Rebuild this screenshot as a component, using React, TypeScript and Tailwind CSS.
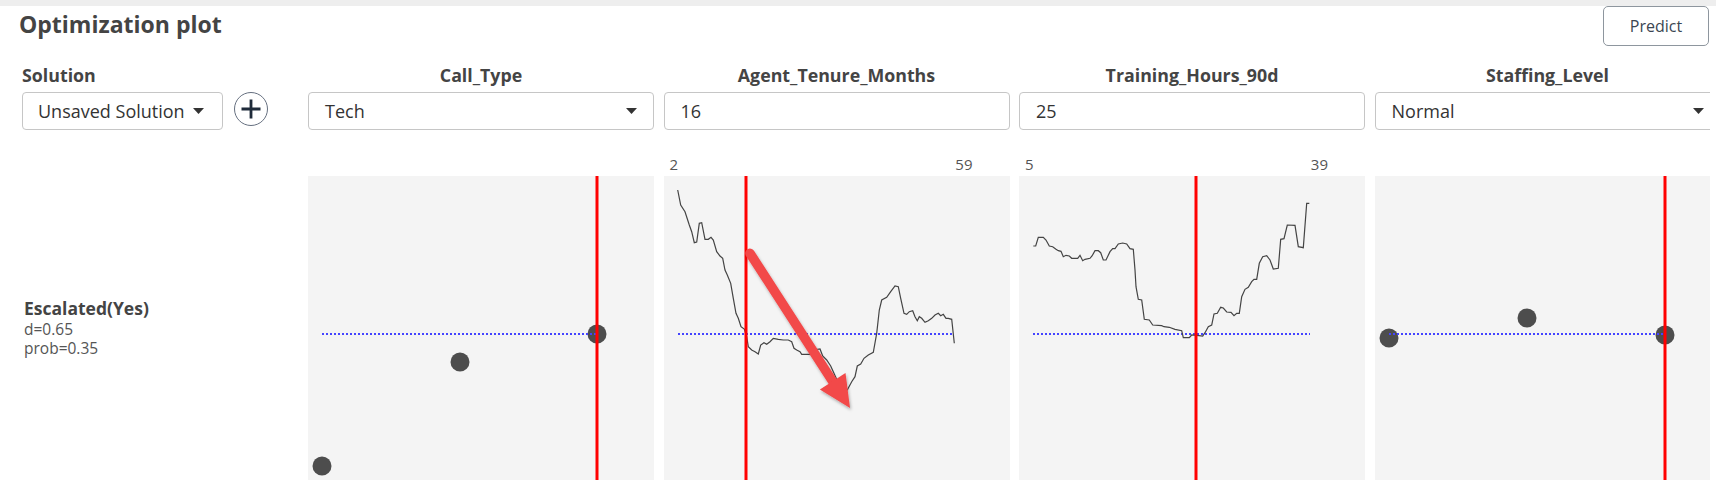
import React from "react";

const curve2 =
  "13.7,14 16.7,29 21,35.7 25.3,49 27.7,55.7 30.3,66.7 32.7,66 35.3,47.3 37.7,46.7 41,63.3 44.3,63.3 47,61.3 49.3,64 52.7,75.7 56,80 58.7,82.3 61,94 63.3,99 66.7,107.3 69.3,122.3 72,137.3 74.3,142.3 77,150.7 80.3,153 82.7,160.7 84.3,170.7 87.7,174 91,175.7 94.3,178 96.7,169 100,166.7 102.7,168.3 106,165.7 109.3,162.3 114.3,163.3 119.3,164 124.3,164 127.7,165.7 130,172.3 132.7,174 136,175.7 137.7,178.3 146,178.3 149.3,174 156,173 158.7,180 162.7,184 166.7,190 169.3,195.7 172.5,203 176,210 180,214 183.3,214 187.7,205.7 191,200.7 193.3,190 196.7,188 200,182.3 204.3,179 209.3,176.3 212.7,157.3 215.3,134 217.7,124 222.7,121.3 226.7,115.7 231,110 234.3,110.7 236.7,122.3 240,137.3 242.7,138.3 245.3,135.7 248.7,134.7 251,140.7 253.3,144.7 255.3,140.7 257.7,142.3 261,146.3 264.3,144.7 267.7,142.3 271,139 274.3,137.3 276.7,139.7 279.3,138.3 282,142.3 284.3,142.3 287.7,143.3 290.3,167.3";

const curve3 =
  "14.3,70 16.7,70 19.3,61.3 24.3,61.3 27,64 30.3,70 33.7,70.7 37,73.3 39.3,74.7 42,75.3 44.3,80.7 47,79.3 50.3,80 52.7,82.3 58.7,82.3 61,79.3 63.7,84.7 66,83.3 71,82.3 73,80 76,74.7 79.3,74.7 81.7,76.7 84.3,84 87,84 91,75.7 93.7,72.7 96,72.7 99.3,68 103.7,67 107.7,68 111,72.7 114.3,73.3 116,94 117,110.7 119.3,123.3 122.7,124 125.3,143.3 130.3,144 133.7,149 142.7,149.7 145,150.7 150.3,151.3 156,153.3 162.7,154.7 164.3,161.7 170.3,161.7 172.7,159 180,159.7 183.7,160 186,156.7 189.3,150.7 192.7,149 195,138 198.3,137.3 201.7,131.3 204.3,132 207.7,136 212,136.3 215,139.7 217.7,137.3 220.3,137.3 222.7,120.7 226,113.3 229.3,111.3 232.7,105.7 235,103.3 237.7,103.3 240.3,87.3 243.7,80.7 247.7,79.7 251,84 254.3,93 259.3,92.3 261.7,63.3 265,62.7 268.3,49 276,49.3 279.3,70.7 284.3,71.7 287.7,27.3 290.3,27.3";

function BlueLine({ x1, x2 }: { x1: number; x2: number }) {
  return (
    <line x1={x1} x2={x2} y1={158} y2={158} stroke="#4444ff" strokeWidth={2} strokeDasharray="2 2" />
  );
}

function RedLine({ x }: { x: number }) {
  return <line x1={x} x2={x} y1={0} y2={304} stroke="#ff0000" strokeWidth={3} />;
}

function Dot({ x, y }: { x: number; y: number }) {
  return <circle cx={x} cy={y} r={9.5} fill="#4d4d4d" />;
}

function Caret() {
  return (
    <svg width="11" height="6" viewBox="0 0 11 6" className="shrink-0">
      <path d="M0 0 L11 0 L5.5 6 Z" fill="#333" />
    </svg>
  );
}

function Field({ value, select }: { value: string; select?: boolean }) {
  return (
    <div className="h-[38px] border border-[#c6c6c6] rounded-[4px] bg-white flex items-center justify-between pl-[16px] pr-[16px] text-[18px] text-[#333]">
      <span>{value}</span>
      {select ? <Caret /> : null}
    </div>
  );
}

function ChartBox({ children }: { children: React.ReactNode }) {
  return (
    <div className="h-[304px] bg-[#f4f4f4]">
      <svg width="346" height="304" viewBox="0 0 346 304" className="block">
        {children}
      </svg>
    </div>
  );
}

function AxisLabels({ min, max }: { min?: string; max?: string }) {
  return (
    <div className="h-[46px] flex items-end justify-between pl-[6px] pr-[37px] pb-[2px] text-[15px] leading-[20px] text-[#555]">
      <span>{min}</span>
      <span>{max}</span>
    </div>
  );
}

function Header({ text }: { text: string }) {
  return (
    <div className="h-[31px] text-center text-[17.8px] leading-[28px] font-bold text-[#444]">{text}</div>
  );
}

export default function App() {
  return (
    <div className="w-[1716px] h-[496px] bg-white font-['Open_Sans',sans-serif] overflow-hidden">
      <div className="h-[6px] bg-[#eeeeee]" />
      <div className="w-[1710px] overflow-hidden">
        <div className="h-[40px] flex justify-between items-start pl-[19px] pr-[1px]">
          <h1 className="mt-[4px] text-[23px] leading-[28px] font-bold text-[#444]">Optimization plot</h1>
          <button className="h-[40px] w-[106px] border border-[#8e969e] rounded-[5px] bg-white text-[16px] text-[#3b4652]">
            Predict
          </button>
        </div>
        <div className="mt-[15px] pl-[22px] grid grid-cols-[276.5px_346px_346px_346px_346px] gap-x-[9.5px] grid-rows-[31px_38px_46px_304px]">
          {/* row 1 */}
          <div className="h-[31px] text-[17.8px] leading-[28px] font-bold text-[#444]">Solution</div>
          <Header text="Call_Type" />
          <Header text="Agent_Tenure_Months" />
          <Header text="Training_Hours_90d" />
          <Header text="Staffing_Level" />
          {/* row 2 */}
          <div className="flex items-center gap-[11px]">
            <div className="w-[201px] h-[38px] border border-[#c6c6c6] rounded-[4px] bg-white flex items-center justify-between pl-[15px] pr-[18px] text-[18px] text-[#333]">
              <span>Unsaved Solution</span>
              <Caret />
            </div>
            <button className="w-[34px] h-[34px] -mt-[4px] rounded-full border border-[#667080] bg-white flex items-center justify-center">
              <svg width="22" height="22" viewBox="0 0 22 22">
                <path d="M11 1.5 V20.5 M1.5 11 H20.5" stroke="#1f2b3a" strokeWidth="2.8" />
              </svg>
            </button>
          </div>
          <Field value="Tech" select />
          <Field value="16" />
          <Field value="25" />
          <Field value="Normal" select />
          {/* row 3 */}
          <div />
          <AxisLabels />
          <AxisLabels min="2" max="59" />
          <AxisLabels min="5" max="39" />
          <AxisLabels />
          {/* row 4 */}
          <div className="flex flex-col justify-center pl-[2px] text-[#444]">
            <div className="text-[17.5px] leading-[21px] font-bold">Escalated(Yes)</div>
            <div className="text-[15.5px] leading-[20px] text-[#555]">d=0.65</div>
            <div className="text-[15.5px] leading-[19px] text-[#555]">prob=0.35</div>
          </div>
          <ChartBox>
            <Dot x={14} y={290} />
            <Dot x={152} y={186} />
            <Dot x={289} y={158} />
            <BlueLine x1={14} x2={289} />
            <RedLine x={289} />
          </ChartBox>
          <ChartBox>
            <defs>
              <filter id="sh" x="-30%" y="-30%" width="160%" height="160%">
                <feDropShadow dx="1" dy="2" stdDeviation="1.5" floodColor="#000" floodOpacity="0.3" />
              </filter>
            </defs>
            <BlueLine x1={14} x2={290} />
            <polyline points={curve2} fill="none" stroke="#444" strokeWidth={1.2} />
            <RedLine x={82} />
            <g filter="url(#sh)">
              <line x1={86} y1={77.3} x2={170} y2={207.5} stroke="#f24848" strokeWidth={9.5} strokeLinecap="round" />
              <path d="M186 232 L181.5 196.9 L155.9 213.6 Z" fill="#f24848" />
            </g>
          </ChartBox>
          <ChartBox>
            <BlueLine x1={14} x2={291} />
            <polyline points={curve3} fill="none" stroke="#444" strokeWidth={1.2} />
            <RedLine x={177} />
          </ChartBox>
          <ChartBox>
            <Dot x={14} y={162} />
            <Dot x={152} y={142} />
            <Dot x={290} y={159} />
            <BlueLine x1={14} x2={290} />
            <RedLine x={290} />
          </ChartBox>
        </div>
      </div>
    </div>
  );
}
